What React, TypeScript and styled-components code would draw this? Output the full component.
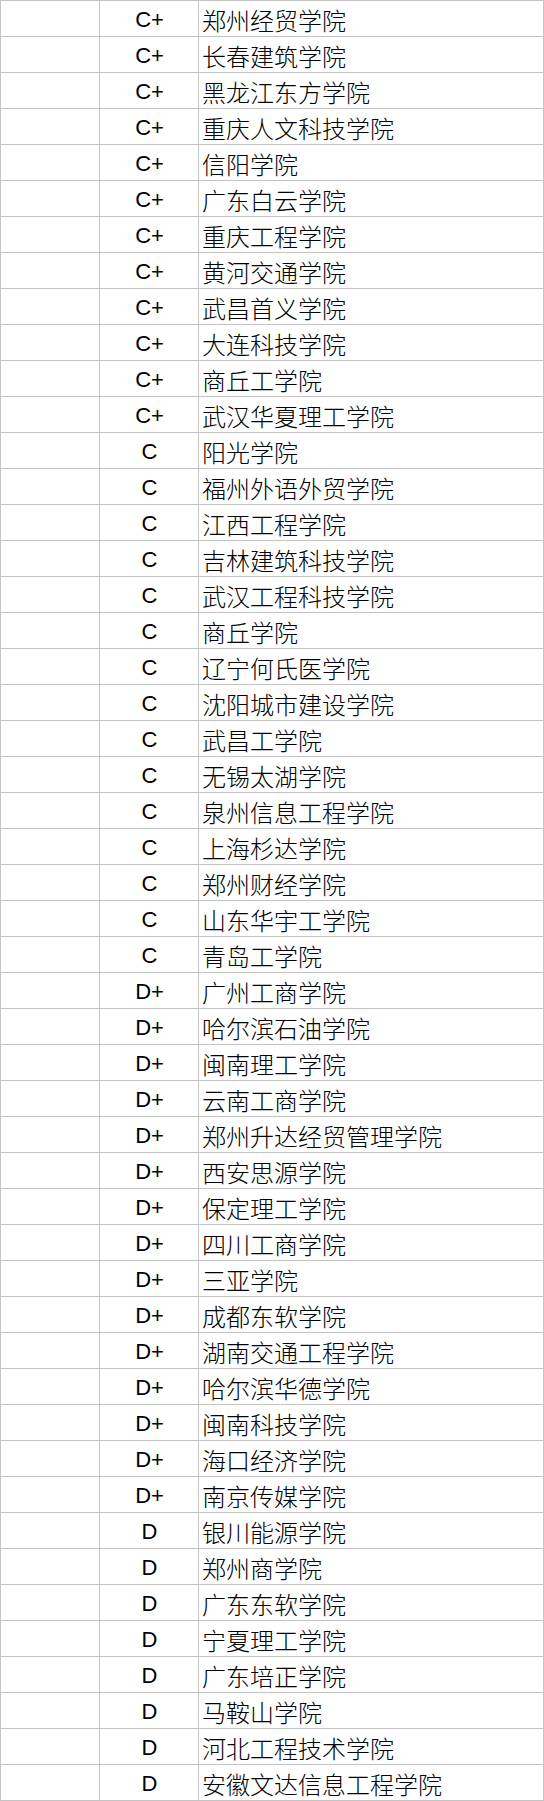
import React from "react";
import styled, { createGlobalStyle } from "styled-components";

const Global = createGlobalStyle`
  html, body { margin: 0; padding: 0; background: #ffffff; }
  body { font-family: "Liberation Sans", Arial, sans-serif; }
`;

const Sheet = styled.div`
  display: grid;
  grid-template-columns: 99px 99px 345px;
  grid-auto-rows: 36px;
  width: 544px;
  box-sizing: border-box;
  border-left: 1px solid #c4c4c4;
  border-top: 1px solid #c4c4c4;
`;

const Cell = styled.div<{ $kind: "blank" | "grade" | "name" }>`
  box-sizing: border-box;
  border-right: 1px solid #c4c4c4;
  border-bottom: 1px solid #c4c4c4;
  display: flex;
  align-items: center;
  justify-content: ${(p) => (p.$kind === "grade" ? "center" : "flex-start")};
  padding: ${(p) => (p.$kind === "name" ? "2px 0 0 3px" : "3px 0 0 1px")};
  color: #000000;
  white-space: nowrap;
  overflow: hidden;
  font-family: ${(p) =>
    p.$kind === "name"
      ? `"Noto Sans CJK SC", "Noto Sans", sans-serif`
      : `"Liberation Sans", Arial, sans-serif`};
  font-size: ${(p) => (p.$kind === "name" ? "24px" : "22px")};
  font-weight: ${(p) => (p.$kind === "name" ? 300 : 400)};
  line-height: 1;
`;

const groups: [string, string[]][] = [
  [
    "C+",
    [
      "郑州经贸学院",
      "长春建筑学院",
      "黑龙江东方学院",
      "重庆人文科技学院",
      "信阳学院",
      "广东白云学院",
      "重庆工程学院",
      "黄河交通学院",
      "武昌首义学院",
      "大连科技学院",
      "商丘工学院",
      "武汉华夏理工学院",
    ],
  ],
  [
    "C",
    [
      "阳光学院",
      "福州外语外贸学院",
      "江西工程学院",
      "吉林建筑科技学院",
      "武汉工程科技学院",
      "商丘学院",
      "辽宁何氏医学院",
      "沈阳城市建设学院",
      "武昌工学院",
      "无锡太湖学院",
      "泉州信息工程学院",
      "上海杉达学院",
      "郑州财经学院",
      "山东华宇工学院",
      "青岛工学院",
    ],
  ],
  [
    "D+",
    [
      "广州工商学院",
      "哈尔滨石油学院",
      "闽南理工学院",
      "云南工商学院",
      "郑州升达经贸管理学院",
      "西安思源学院",
      "保定理工学院",
      "四川工商学院",
      "三亚学院",
      "成都东软学院",
      "湖南交通工程学院",
      "哈尔滨华德学院",
      "闽南科技学院",
      "海口经济学院",
      "南京传媒学院",
    ],
  ],
  [
    "D",
    [
      "银川能源学院",
      "郑州商学院",
      "广东东软学院",
      "宁夏理工学院",
      "广东培正学院",
      "马鞍山学院",
      "河北工程技术学院",
      "安徽文达信息工程学院",
    ],
  ],
];

const rows = groups.flatMap(([grade, names]) => names.map((name) => ({ grade, name })));

export default function App() {
  return (
    <>
      <Global />
      <Sheet>
        {rows.map((r, i) => (
          <React.Fragment key={i}>
            <Cell $kind="blank" />
            <Cell $kind="grade">{r.grade}</Cell>
            <Cell $kind="name">{r.name}</Cell>
          </React.Fragment>
        ))}
      </Sheet>
    </>
  );
}
